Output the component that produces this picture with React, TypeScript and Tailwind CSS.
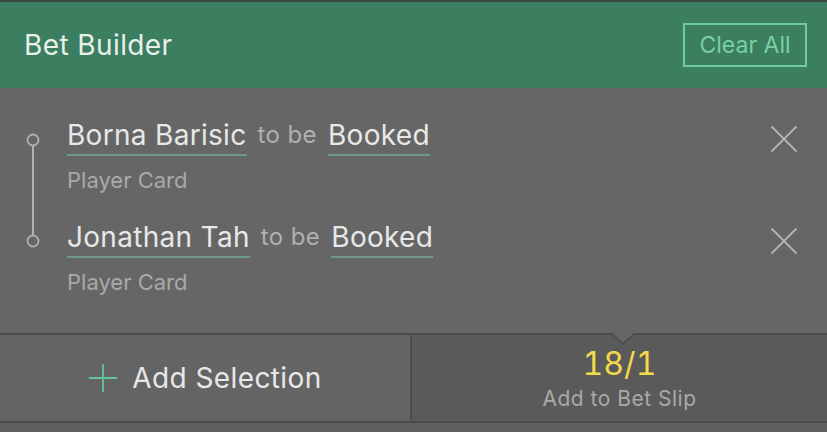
import { X, Plus } from 'lucide-react';

const font = { fontFamily: 'Inter, "Noto Sans", sans-serif' };

function Selection({ name, market }: { name: string; market: string }) {
  return (
    <div className="flex items-start justify-between pr-[19px]">
      <div className="flex flex-col">
        <div className="flex items-end">
          <span className="border-b-2 border-[#6f9a88] pb-[3px] text-[28px] leading-[32px] tracking-[0.3px] text-[#e8e8e8]">
            {name}
          </span>
          <span className="mx-[11px] pb-[5px] text-[24px] leading-[32px] tracking-[0.4px] text-[#b0b0b0]">to be</span>
          <span className="border-b-2 border-[#6f9a88] pb-[3px] text-[28px] leading-[32px] tracking-[0.3px] text-[#e8e8e8]">
            Booked
          </span>
        </div>
        <span className="mt-[11px] text-[22px] leading-[26px] text-[#a9a9a9]">{market}</span>
      </div>
      <X className="-mt-[4px] h-[48px] w-[48px] text-[#b3b3b3]" strokeWidth={0.9} />
    </div>
  );
}

export default function App() {
  return (
    <div className="flex h-[432px] w-[827px] flex-col bg-[#5f5f5f]" style={font}>
      <div className="h-[2px] bg-[#3e4641]" />
      <header className="flex h-[86px] items-center justify-between bg-[#3c7e60] pl-[24px] pr-[20px]">
        <h1 className="text-[28px] font-normal tracking-[0.4px] text-[#e9efeb]">Bet Builder</h1>
        <button className="h-[44px] w-[124px] border-2 border-[#6fcb9d] text-[23px] text-[#79d0a4]">
          Clear All
        </button>
      </header>

      <section className="flex h-[245px] bg-[#666666]">
        <svg width="67" height="245" className="shrink-0">
          <line x1="33" y1="58" x2="33" y2="147" stroke="#b0b0b0" strokeWidth="2" />
          <circle cx="33" cy="52" r="5.5" fill="none" stroke="#b0b0b0" strokeWidth="1.8" />
          <circle cx="33" cy="153" r="5.5" fill="none" stroke="#b0b0b0" strokeWidth="1.8" />
        </svg>
        <div className="flex flex-1 flex-col gap-[28px] pt-[31px]">
          <Selection name="Borna Barisic" market="Player Card" />
          <Selection name="Jonathan Tah" market="Player Card" />
        </div>
      </section>

      <footer className="flex h-[90px] border-y-2 border-[#4c4c4c]">
        <button className="flex w-[412px] items-center justify-center gap-[6px] border-r-2 border-[#4c4c4c] bg-[#646464] pr-[8px]">
          <Plus className="h-[46px] w-[46px] text-[#5ec697]" strokeWidth={0.95} />
          <span className="text-[28px] tracking-[0.4px] text-[#e8e8e8]">Add Selection</span>
        </button>
        <button className="relative flex flex-1 flex-col items-center justify-center bg-[#5a5a5a] pt-[4px]">
          <svg width="26" height="14" className="absolute -top-[2px] left-[198px]">
            <polygon points="0,0 26,0 13,12" fill="#4c4c4c" />
            <polygon points="2,0 24,0 13,9.5" fill="#666666" />
          </svg>
          <span className="text-[32px] leading-[38px] tabular-nums text-[#f3d84a]">18/1</span>
          <span className="text-[21px] leading-[32px] tracking-[0.5px] text-[#a9a9a9]">Add to Bet Slip</span>
        </button>
      </footer>
    </div>
  );
}
